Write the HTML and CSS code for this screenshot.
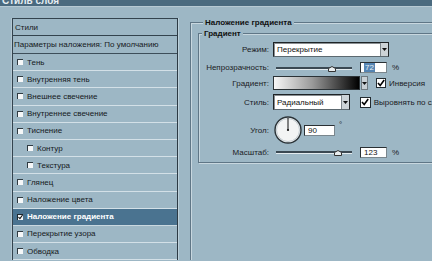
FILE: index.html
```html
<!DOCTYPE html>
<html lang="ru">
<head>
<meta charset="utf-8">
<link rel="stylesheet" href="styles.css">
</head>
<body>
<div class="titlebar"><span>Стиль слоя</span></div>
<div class="main">
  <div class="list">
    <div class="item head">Стили</div>
    <div class="item params">Параметры наложения: По умолчанию</div>
    <div class="item"><span class="cb"></span>Тень</div>
    <div class="item"><span class="cb"></span>Внутренняя тень</div>
    <div class="item"><span class="cb"></span>Внешнее свечение</div>
    <div class="item"><span class="cb"></span>Внутреннее свечение</div>
    <div class="item"><span class="cb"></span>Тиснение</div>
    <div class="item sub"><span class="cb"></span>Контур</div>
    <div class="item sub"><span class="cb"></span>Текстура</div>
    <div class="item"><span class="cb"></span>Глянец</div>
    <div class="item"><span class="cb"></span>Наложение цвета</div>
    <div class="item active"><span class="cb on"><svg width="6" height="6" viewBox="0 0 6 6"><path d="M0.5 3 L2.3 5 L5.5 0.6" fill="none" stroke="#111" stroke-width="1.3"/></svg></span>Наложение градиента</div>
    <div class="item"><span class="cb"></span>Перекрытие узора</div>
    <div class="item"><span class="cb"></span>Обводка</div>
  </div>
  <div class="panel">
    <div class="group outer">
      <div class="group-title">Наложение градиента</div>
      <div class="group inner">
        <div class="group-title">Градиент</div>
        <div class="form">
          <div class="row r1">
            <span class="lbl">Режим:</span>
            <div class="select mode"><span class="val">Перекрытие</span><span class="dd"><svg width="5" height="3" viewBox="0 0 5 3"><path d="M0 0H5L2.5 3Z" fill="#111"/></svg></span></div>
          </div>
          <div class="row r2">
            <span class="lbl">Непрозрачность:</span>
            <div class="slider"><span class="track"></span><svg class="thumb t72" width="8" height="6" viewBox="0 0 8 6"><path d="M0.5 5.5V2.5L4 0.5L7.5 2.5V5.5Z" fill="#e9eef0" stroke="#333" stroke-width="1"/></svg></div>
            <div class="num"><span class="sel">72</span></div>
            <span class="unit">%</span>
          </div>
          <div class="row r3">
            <span class="lbl">Градиент:</span>
            <div class="grad"></div>
            <span class="dd solo"><svg width="5" height="3" viewBox="0 0 5 3"><path d="M0 0H5L2.5 3Z" fill="#111"/></svg></span>
            <span class="chk"><svg width="8" height="8" viewBox="0 0 8 8"><path d="M1 4 L3.2 6.5 L7.2 1" fill="none" stroke="#000" stroke-width="1.6"/></svg></span>
            <span class="chk-lbl">Инверсия</span>
          </div>
          <div class="row r4">
            <span class="lbl">Стиль:</span>
            <div class="select style"><span class="val">Радиальный</span><span class="dd"><svg width="5" height="3" viewBox="0 0 5 3"><path d="M0 0H5L2.5 3Z" fill="#111"/></svg></span></div>
            <span class="chk second"><svg width="8" height="8" viewBox="0 0 8 8"><path d="M1 4 L3.2 6.5 L7.2 1" fill="none" stroke="#000" stroke-width="1.6"/></svg></span>
            <span class="chk-lbl">Выровнять по слою</span>
          </div>
          <div class="row r5">
            <span class="lbl">Угол:</span>
            <svg class="dial" width="28" height="28" viewBox="0 0 28 28">
              <circle cx="14" cy="14" r="13" fill="#f3f4f4" stroke="#2b3338" stroke-width="1.4"/>
              <circle cx="14" cy="14" r="11.5" fill="none" stroke="#c3ccd1" stroke-width="1"/>
              <path d="M14 14V2" stroke="#111" stroke-width="1"/>
              <circle cx="14" cy="14" r="1.1" fill="#111"/>
            </svg>
            <div class="num deg">90</div>
            <span class="unit degsign">°</span>
          </div>
          <div class="row r6">
            <span class="lbl">Масштаб:</span>
            <div class="slider"><span class="track"></span><svg class="thumb t123" width="8" height="6" viewBox="0 0 8 6"><path d="M0.5 5.5V2.5L4 0.5L7.5 2.5V5.5Z" fill="#e9eef0" stroke="#333" stroke-width="1"/></svg></div>
            <div class="num">123</div>
            <span class="unit">%</span>
          </div>
        </div>
      </div>
    </div>
  </div>
</div>
</body>
</html>
```

FILE: styles.css
```css
* { box-sizing: border-box; margin: 0; padding: 0; }
html, body { width: 432px; height: 261px; overflow: hidden; }
body {
  background: #9db7c5;
  font-family: "Liberation Sans", Arial, sans-serif;
  font-size: 8px;
  color: #161a1d;
}

.titlebar {
  height: 7px;
  background: #4a6a7f;
  border-bottom: 1px solid #b6c9d3;
  overflow: hidden;
}
.titlebar span {
  display: block;
  margin: -5px 0 0 2px;
  font-weight: bold;
  font-size: 10px;
  line-height: 12px;
  color: #e6eef2;
}

.main {
  display: flex;
  height: 253px;
  overflow: hidden;
  padding: 11px 0 0 12px;
}

.list {
  width: 166px;
  flex: none;
  display: flex;
  flex-direction: column;
  border-left: 1px solid #34444f;
  border-right: 1px solid #2c3a44;
  box-shadow: 1px 0 0 #bcd0da, -1px 0 0 #b3c7d2;
}
.item {
  flex: none;
  height: 17.2px;
  display: flex;
  align-items: center;
  gap: 4px;
  padding-left: 4px;
  border-bottom: 1px solid #d3e0e7;
  white-space: nowrap;
}
.item.head {
  height: 18px;
  padding-left: 2px;
  border-top: 1px solid #33434e;
  border-bottom: 1px solid #33434e;
}
.item.params {
  height: 18px;
  padding-left: 1px;
  border-bottom: 1px solid #3d4e5a;
}
.item.sub { padding-left: 14px; }
.item.active {
  background: #4a7390;
  color: #ffffff;
  font-weight: bold;
  border-bottom-color: #c9d8e0;
}

.cb {
  width: 6px;
  height: 6px;
  flex: none;
  background: #f6f8f9;
  border-top: 1px solid #2f3a41;
  border-left: 1px solid #2f3a41;
  display: flex;
  align-items: center;
  justify-content: center;
}
.cb svg { display: block; }
.cb.on { border-color: #1d262c; }

.panel {
  margin: 4px 0 0 12px;
  flex: none;
}

.group {
  position: relative;
  border: 1px solid #5f7686;
  box-shadow: inset 1px 1px 0 #c8d7df, 1px 1px 0 #c8d7df;
}
.group.outer {
  width: 260px;
  height: 260px;
}
.group.inner {
  margin: 10px 0 0 7px;
  width: 250px;
  height: 130px;
}
.group-title {
  position: absolute;
  top: -5px;
  left: 12px;
  padding: 0 2px;
  background: #9db7c5;
  font-weight: bold;
  line-height: 10px;
  color: #111;
  white-space: nowrap;
}
.inner .group-title { left: 3px; top: -5px; }

.form {
  padding: 8px 0 0 0;
  display: flex;
  flex-direction: column;
}
.row {
  display: flex;
  align-items: center;
  white-space: nowrap;
}
.lbl {
  width: 70px;
  flex: none;
  margin-right: 4px;
  text-align: right;
  color: #1b2024;
}
.r1 { height: 15px; }
.r2 { height: 15px; margin-top: 3px; }
.r3 { height: 14px; margin-top: 1px; }
.r4 { height: 16px; margin-top: 4px; }
.r5 { height: 28px; margin-top: 6px; }
.r6 { height: 14px; margin-top: 1px; }

.select {
  height: 100%;
  display: flex;
  background: #ffffff;
  border: 1px solid #1e2326;
  border-bottom-color: #5c6970;
  box-shadow: inset 1px 1px 0 #8a8f92;
}
.select.mode { width: 116px; }
.select.style { width: 78px; }
.select .val {
  flex: 1;
  padding-left: 3px;
  display: flex;
  align-items: center;
  color: #111;
}
.dd {
  width: 8px;
  flex: none;
  background: #ccd3d7;
  border-left: 1px solid #7e878c;
  display: flex;
  align-items: center;
  justify-content: center;
}
.dd svg { display: block; }
.dd.solo {
  height: 14px;
  width: 7px;
  margin-left: 1px;
  border: 1px solid #6f7a80;
  background: #c7cfd4;
}

.slider {
  position: relative;
  width: 84px;
  height: 100%;
  flex: none;
  display: flex;
  align-items: center;
  padding: 0 5px 0 3px;
}
.track {
  display: block;
  width: 100%;
  height: 3px;
  background: #3a4852;
  border-bottom: 1px solid #e3ebef;
  margin-top: 1px;
}
.thumb {
  position: absolute;
  top: 6px;
}
.t72 { left: 55px; }
.t123 { left: 61px; }
.r6 .thumb { top: 5px; }

.num {
  width: 27px;
  height: 11px;
  flex: none;
  margin-left: 3px;
  background: #ffffff;
  border: 1px solid #2a3034;
  border-bottom-color: #7a868d;
  border-right-color: #7a868d;
  padding-left: 3px;
  line-height: 9px;
  color: #111;
}
.num .sel {
  background: #5585b3;
  color: #e8f0f6;
  padding: 0 1px;
}
.num.deg { width: 31px; margin-left: 2px; }
.unit { margin-left: 5px; color: #1b2024; }
.degsign { margin-left: 4px; align-self: flex-start; margin-top: 4px; }

.grad {
  width: 87px;
  height: 14px;
  flex: none;
  background: linear-gradient(90deg, #f7f7f7 0%, #9a9a9a 45%, #000 100%);
  border: 1px solid #2b3236;
}

.chk {
  width: 10px;
  height: 10px;
  flex: none;
  margin-left: 8px;
  background: #ffffff;
  border: 1px solid #222a2f;
  display: flex;
  align-items: center;
  justify-content: center;
}
.chk svg { display: block; }
.chk.second { margin-left: 10px; width: 11px; height: 11px; }
.chk-lbl { margin-left: 3px; color: #1b2024; }

.dial { display: block; margin-left: 1px; flex: none; }
```
